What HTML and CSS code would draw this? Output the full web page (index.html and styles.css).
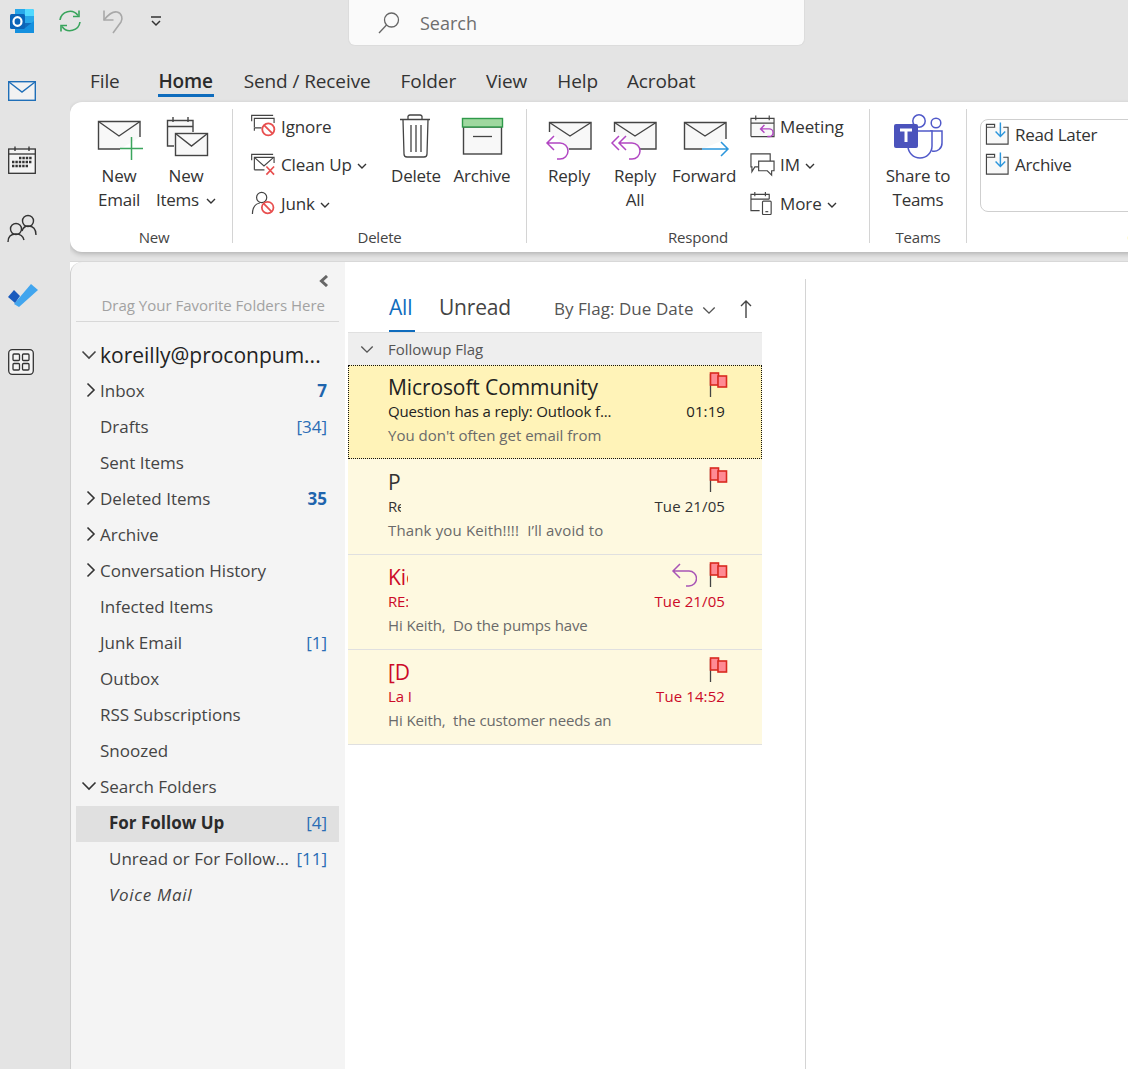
FILE: index.html
```html
<!DOCTYPE html>
<html lang="en">
<head>
<meta charset="utf-8">
<title>Outlook</title>
<link rel="stylesheet" href="styles.css">
</head>
<body>
<svg class="defs" width="0" height="0" aria-hidden="true">
  <defs>
    <symbol id="flag" viewBox="0 0 20 26">
      <path d="M1.500 2V25" fill="none" stroke="#444" stroke-width="1.300"/>
      <rect x="1.500" y="1" width="8" height="12" fill="#ff8a94" stroke="#d92a20" stroke-width="1.600"/>
      <rect x="9" y="4" width="8.500" height="11" fill="#ff8a94" stroke="#d92a20" stroke-width="1.600"/>
    </symbol>
    <symbol id="chev-down" viewBox="0 0 16 10">
      <path d="M1.500 1.500 8 8l6.500-6.500" fill="none" stroke="currentColor" stroke-width="1.600"/>
    </symbol>
    <symbol id="chev-right" viewBox="0 0 10 16">
      <path d="M1.500 1.500 8 8l-6.500 6.500" fill="none" stroke="currentColor" stroke-width="1.600"/>
    </symbol>
    <symbol id="tiny-down" viewBox="0 0 10 6">
      <path d="M1 1l4 4 4-4" fill="none" stroke="currentColor" stroke-width="1.400"/>
    </symbol>
  </defs>
</svg>
<div class="app">
  <header class="titlebar">
    <div class="qat">
      <svg class="logo" width="24" height="24" viewBox="0 0 24 24">
        <path d="M5 0h17a2 2 0 0 1 2 2v10H5z" fill="#28a8ea"/>
        <path d="M15 0h7a2 2 0 0 1 2 2v5h-9z" fill="#50d9ff"/>
        <path d="M5 7h10v7H5z" fill="#0a7ad1"/>
        <path d="M15 7h9v7h-9z" fill="#28a8ea"/>
        <path d="M5 14h19v8a2 2 0 0 1-2 2H5z" fill="#0f6cbd"/>
        <path d="M5 16l10 3 9-7v12H5z" fill="#1490df"/>
        <rect x="0" y="5" width="15" height="15" rx="1.500" fill="#0a64b8"/>
        <ellipse cx="7.500" cy="12.500" rx="4" ry="4.300" fill="none" stroke="#fff" stroke-width="2.200"/>
      </svg>
      <svg class="sync" width="24" height="24" viewBox="0 0 24 24" fill="none" stroke="#38a45c" stroke-width="1.600">
        <path d="M2 11A10 10 0 0 1 20 6.500"/><path d="M22 13A10 10 0 0 1 4 17.500"/>
        <path d="M21 1.500V7.500H15"/><path d="M3 22.500V16.500H9"/>
      </svg>
      <svg class="undo" width="24" height="26" viewBox="0 0 24 26" fill="none" stroke="#a8a8a8" stroke-width="1.600">
        <path d="M3 1.500V11H12.500"/><path d="M3 11C7 6 11 2 16 3c5 1 6 7 4 10l-8 11"/>
      </svg>
      <svg class="qat-more" width="10" height="11" viewBox="0 0 10 11" fill="none" stroke="#333" stroke-width="1.500">
        <path d="M0 1H10"/><path d="M1 5l4 4 4-4"/>
      </svg>
    </div>
    <div class="search">
      <svg width="22" height="22" viewBox="0 0 22 22" fill="none" stroke="#666" stroke-width="1.300">
        <circle cx="13.500" cy="8" r="7"/><path d="M8.500 13 1 21"/>
      </svg>
      <span>Search</span>
    </div>
  </header>
  <div class="workspace">
    <nav class="rail">
      <div class="rail-item">
        <svg width="28" height="20" viewBox="0 0 28 20"><rect x=".7" y=".7" width="26.600" height="18.600" fill="#f2f2f2" stroke="#1f6fb8" stroke-width="1.400"/><path d="M1 1l13 10L27 1" fill="none" stroke="#1f6fb8" stroke-width="1.400"/></svg>
      </div>
      <div class="rail-item">
        <svg width="28" height="28" viewBox="0 0 28 28"><rect x=".7" y="3" width="26.600" height="24.300" fill="#f4f4f4" stroke="#333" stroke-width="1.300"/><path d="M1 8H27" stroke="#333" stroke-width="1.300"/><path d="M7 .5V5M21 .5V5" stroke="#333" stroke-width="1.300"/><path d="M11 12H24M4 16H24M4 20H21" stroke="#333" stroke-width="2.400" stroke-dasharray="2.400 1"/></svg>
      </div>
      <div class="rail-item short rail-tight">
        <svg width="30" height="28" viewBox="0 0 30 28" fill="none" stroke="#333" stroke-width="1.400"><circle cx="9" cy="15" r="5.500"/><path d="M1 28c0-6 3-8 8-8s7 2 8 6"/><circle cx="21" cy="7" r="5.500"/><path d="M15 17c1-3 3-5 6-5 5 0 8 3 8 9"/></svg>
      </div>
      <div class="rail-item short rail-tight">
        <svg width="31" height="24" viewBox="0 0 31 24"><path d="M7 21 24 1l7 6-19 17z" fill="#41a5ee"/><path d="M7 7l6 6-5 7-7-6z" fill="#185abd"/></svg>
      </div>
      <div class="rail-item short">
        <svg width="26" height="26" viewBox="0 0 26 26" fill="#f4f4f4" stroke="#333" stroke-width="1.300"><rect x=".7" y=".7" width="24.600" height="24.600" rx="3.500"/><rect x="5" y="5" width="6.500" height="6.500" rx="1"/><rect x="14.500" y="5" width="6.500" height="6.500" rx="1"/><rect x="5" y="14.500" width="6.500" height="6.500" rx="1"/><rect x="14.500" y="14.500" width="6.500" height="6.500" rx="1"/></svg>
      </div>
    </nav>
    <div class="main">
      <div class="tabs">
        <span class="tab tab-file">File</span>
        <span class="tab tab-active">Home</span>
        <span class="tab">Send / Receive</span>
        <span class="tab">Folder</span>
        <span class="tab">View</span>
        <span class="tab tab-help">Help</span>
        <span class="tab">Acrobat</span>
      </div>
      <section class="ribbon">
        <div class="group group-new">
          <div class="group-body">
            <div class="big-btn big-first">
              <svg class="big-icon" viewBox="0 0 52 53" fill="none">
                <path d="M27 39H5.500V11.500H47V27" fill="#f8f8f8" stroke="#444" stroke-width="1.400"/>
                <path d="M5.500 11.500 26 26 47 11.500" stroke="#444" stroke-width="1.400"/>
                <path d="M38.500 27V50M27 38.500H50" stroke="#3ba55d" stroke-width="1.500"/>
              </svg>
              <span>New<br>Email</span>
            </div>
            <div class="big-btn">
              <svg class="big-icon" viewBox="0 0 52 53" fill="none" stroke="#444" stroke-width="1.400">
                <path d="M14 36H7.500V10.500H33V22" fill="#f8f8f8"/>
                <path d="M7.500 16.500H33M13 7V12M28 7V12"/>
                <rect x="15.500" y="23.500" width="32" height="22" fill="#f8f8f8"/>
                <path d="M15.500 23.500 31.500 36 47.500 23.500"/>
              </svg>
              <span>New<br>Items <svg class="caret caret-wide" width="10" height="6"><use href="#tiny-down"/></svg></span>
            </div>
          </div>
          <div class="group-label group-label-new">New</div>
        </div>
        <div class="group group-delete">
          <div class="group-body">
            <div class="small-col">
              <div class="small-btn">
                <svg class="small-icon" viewBox="0 0 26 24" fill="none">
                  <path d="M.7 7V1H23M3.500 13V4H24V9M3.500 17V14H11" stroke="#444" stroke-width="1.200"/>
                  <circle cx="18" cy="15.500" r="6.300" fill="#fff" stroke="#e84f4f" stroke-width="1.900"/><path d="M13.500 11l9 9" stroke="#e84f4f" stroke-width="1.900"/>
                </svg>
                <span>Ignore</span>
              </div>
              <div class="small-btn">
                <svg class="small-icon" viewBox="0 0 26 24" fill="none">
                  <path d="M.7 7V1H23M3.500 17V4H24V10M3.500 17H14" stroke="#444" stroke-width="1.200"/>
                  <path d="M3.500 4l10 9 10-9" stroke="#444" stroke-width="1.200"/>
                  <path d="M16 13.500l8 8.500M24 13.500 16 22" stroke="#e84f4f" stroke-width="1.700"/>
                </svg>
                <span>Clean Up <svg class="caret" width="10" height="6"><use href="#tiny-down"/></svg></span>
              </div>
              <div class="small-btn">
                <svg class="small-icon" viewBox="0 0 26 26" fill="none">
                  <circle cx="11" cy="7" r="5.500" stroke="#444" stroke-width="1.300"/>
                  <path d="M1 25c0-7 3-11 8-12" stroke="#444" stroke-width="1.300"/>
                  <circle cx="17.500" cy="18" r="6.300" fill="#fff" stroke="#e84f4f" stroke-width="1.900"/><path d="M13 13.500l9 9" stroke="#e84f4f" stroke-width="1.900"/>
                </svg>
                <span>Junk <svg class="caret" width="10" height="6"><use href="#tiny-down"/></svg></span>
              </div>
            </div>
            <div class="big-btn">
              <svg class="big-icon" viewBox="0 0 52 53" fill="none" stroke="#444" stroke-width="1.300">
                <path d="M10 9.500H40M18 9V7.500a2 2 0 0 1 2-2.500h10a2 2 0 0 1 2 2.500V9"/>
                <path d="M13 10 14 44a3 3 0 0 0 3 3H34a3 3 0 0 0 3-3L38 10"/>
                <path d="M21 15V42M26 15V42M31 15V42"/>
              </svg>
              <span>Delete</span>
            </div>
            <div class="big-btn">
              <svg class="big-icon" viewBox="0 0 52 53" fill="none">
                <rect x="7.500" y="17" width="38" height="27" fill="#f8f8f8" stroke="#444" stroke-width="1.400"/>
                <rect x="6.500" y="8.500" width="40" height="8.500" fill="#9fd89f" stroke="#2f9a4a" stroke-width="1.400"/>
                <path d="M17 26.500H36" stroke="#444" stroke-width="1.300"/>
              </svg>
              <span>Archive</span>
            </div>
          </div>
          <div class="group-label">Delete</div>
        </div>
        <div class="group group-respond">
          <div class="group-body">
            <div class="big-btn">
              <svg class="big-icon" viewBox="0 0 52 53" fill="none">
                <path d="M6.500 22V12.500H48V39H26" fill="#f8f8f8" stroke="#444" stroke-width="1.400"/>
                <path d="M6.500 12.500 27 26 48 12.500" stroke="#444" stroke-width="1.400"/>
                <path d="M11 26 4 33l7 7M4 33H17a8 8 0 0 1 0 16h-3" stroke="#b146c2" stroke-width="1.500"/>
              </svg>
              <span>Reply</span>
            </div>
            <div class="big-btn">
              <svg class="big-icon" viewBox="0 0 52 53" fill="none">
                <path d="M5.500 22V12.500H47V39H31" fill="#f8f8f8" stroke="#444" stroke-width="1.400"/>
                <path d="M5.500 12.500 26 26 47 12.500" stroke="#444" stroke-width="1.400"/>
                <path d="M10 26 3 33l7 7M17 26l-7 7 7 7M10 33H23a8 8 0 0 1 0 16h-3" stroke="#b146c2" stroke-width="1.500"/>
              </svg>
              <span>Reply<br>All</span>
            </div>
            <div class="big-btn big-wide">
              <svg class="big-icon" viewBox="0 0 52 53" fill="none">
                <path d="M24 39H6.500V12.500H48V29" fill="#f8f8f8" stroke="#444" stroke-width="1.400"/>
                <path d="M6.500 12.500 27 26 48 12.500" stroke="#444" stroke-width="1.400"/>
                <path d="M24 39H50M43 32l7 7-7 7" stroke="#2b96dc" stroke-width="1.500"/>
              </svg>
              <span>Forward</span>
            </div>
            <div class="small-col small-col-respond">
              <div class="small-btn">
                <svg class="small-icon" viewBox="0 0 26 24" fill="none">
                  <path d="M1 23V4H25V23H1M1 9H25M6 1V6M20 1V6" stroke="#444" stroke-width="1.200" fill="#f8f8f8"/>
                  <path d="M15 11l-4 4 4 4M11 15H20a3.500 3.500 0 0 1 0 8h-2" stroke="#b146c2" stroke-width="1.500"/>
                </svg>
                <span>Meeting</span>
              </div>
              <div class="small-btn">
                <svg class="small-icon" viewBox="0 0 26 24" fill="none" stroke="#444" stroke-width="1.200">
                  <path d="M9 14H5L2 19V14H1V.5H21V8"/>
                  <path d="M9 8H25V18H22.500V22.500L18 18H9Z" fill="#fff"/>
                </svg>
                <span>IM <svg class="caret" width="10" height="6"><use href="#tiny-down"/></svg></span>
              </div>
              <div class="small-btn">
                <svg class="small-icon" viewBox="0 0 26 24" fill="none" stroke="#444" stroke-width="1.200">
                  <path d="M10 20H1V3H20V8M1 8H20M5 .5V5M16 .5V5"/>
                  <rect x="13" y="10" width="9" height="14" rx="1" fill="#fff"/><path d="M16 21h3"/>
                </svg>
                <span>More <svg class="caret" width="10" height="6"><use href="#tiny-down"/></svg></span>
              </div>
            </div>
          </div>
          <div class="group-label">Respond</div>
        </div>
        <div class="group group-teams">
          <div class="group-body">
            <div class="big-btn big-teams">
              <svg class="big-icon" viewBox="0 0 52 53" fill="none" stroke="#5059c9" stroke-width="1.500">
                <circle cx="44" cy="13" r="4.800"/>
                <circle cx="27" cy="11" r="6.200"/>
                <path d="M38 21H50V33A8 8 0 0 1 40 41"/>
                <path d="M16 21H40V36A12 12 0 0 1 16 36Z" fill="#fff"/>
                <rect x="2" y="14" width="24" height="24" rx="2" fill="#4b53bc" stroke="none"/>
                <path d="M8 20H20M14 20V32" stroke="#fff" stroke-width="3"/>
              </svg>
              <span>Share to<br>Teams</span>
            </div>
          </div>
          <div class="group-label">Teams</div>
        </div>
        <div class="group group-quick">
          <div class="group-body">
            <div class="quick-box">
              <div class="quick-row">
                <svg class="small-icon" viewBox="0 0 26 24" fill="none">
                  <path d="M1.500 5H10V2H1.500V22.500H24V5H19" stroke="#444" stroke-width="1.200" fill="#f8f8f8"/>
                  <path d="M16 0V14M11 9.500l5 5 5-5" stroke="#2b96dc" stroke-width="1.500"/>
                </svg>
                <span>Read Later</span>
              </div>
              <div class="quick-row">
                <svg class="small-icon" viewBox="0 0 26 24" fill="none">
                  <path d="M1.500 5H10V2H1.500V22.500H24V5H19" stroke="#444" stroke-width="1.200" fill="#f8f8f8"/>
                  <path d="M16 0V14M11 9.500l5 5 5-5" stroke="#2b96dc" stroke-width="1.500"/>
                </svg>
                <span>Archive</span>
              </div>
            </div>
          </div>
          <div class="group-label">Quick Steps</div>
        </div>
      </section>
      <div class="panes">
        <aside class="folders">
          <div class="fav">
            <svg class="collapse" width="10" height="12" viewBox="0 0 10 12"><path d="M8 1 2.500 6 8 11" fill="none" stroke="#666" stroke-width="3"/></svg>
            <div class="fav-hint">Drag Your Favorite Folders Here</div>
          </div>
          <div class="account"><svg class="acc-chev" width="16" height="10"><use href="#chev-down"/></svg><span class="account-name">koreilly@proconpum...</span></div>
          <ul class="tree">
            <li class="row"><svg class="row-chev" width="10" height="16"><use href="#chev-right"/></svg><span class="name">Inbox</span><b class="count-bold">7</b></li>
            <li class="row"><span class="name">Drafts</span><span class="count">[34]</span></li>
            <li class="row"><span class="name">Sent Items</span></li>
            <li class="row"><svg class="row-chev" width="10" height="16"><use href="#chev-right"/></svg><span class="name">Deleted Items</span><b class="count-bold">35</b></li>
            <li class="row"><svg class="row-chev" width="10" height="16"><use href="#chev-right"/></svg><span class="name">Archive</span></li>
            <li class="row"><svg class="row-chev" width="10" height="16"><use href="#chev-right"/></svg><span class="name">Conversation History</span></li>
            <li class="row"><span class="name">Infected Items</span></li>
            <li class="row"><span class="name">Junk Email</span><span class="count">[1]</span></li>
            <li class="row"><span class="name">Outbox</span></li>
            <li class="row"><span class="name">RSS Subscriptions</span></li>
            <li class="row"><span class="name">Snoozed</span></li>
            <li class="row"><svg class="row-chev-down" width="16" height="10"><use href="#chev-down"/></svg><span class="name">Search Folders</span></li>
            <li class="row row-sub row-selected"><span class="name">For Follow Up</span><span class="count">[4]</span></li>
            <li class="row row-sub"><span class="name">Unread or For Follow...</span><span class="count">[11]</span></li>
            <li class="row row-sub"><span class="name name-italic">Voice Mail</span></li>
          </ul>
        </aside>
        <div class="reading">
          <section class="list">
            <div class="list-tabs">
              <span class="list-tab list-tab-active">All</span>
              <span class="list-tab">Unread</span>
              <span class="sort">By Flag: Due Date <svg class="sort-chev" width="14" height="9"><use href="#chev-down"/></svg></span>
              <svg class="sort-arrow" width="12" height="18" viewBox="0 0 12 18" fill="none" stroke="#444" stroke-width="1.400"><path d="M6 1V18M1 6l5-5 5 5"/></svg>
            </div>
            <div class="group-head"><svg width="14" height="9"><use href="#chev-down"/></svg><span>Followup Flag</span></div>
            <article class="mail mail-selected">
              <div class="mail-top"><span class="sender">Microsoft Community</span><svg class="flag" width="20" height="26"><use href="#flag"/></svg></div>
              <div class="mail-mid"><span class="subject">Question has a reply: Outlook f...</span><span class="time">01:19</span></div>
              <div class="preview">You don't often get email from</div>
            </article>
            <article class="mail">
              <div class="mail-top"><span class="sender clip-a">P</span><svg class="flag" width="20" height="26"><use href="#flag"/></svg></div>
              <div class="mail-mid"><span class="subject clip-a">Re</span><span class="time">Tue 21/05</span></div>
              <div class="preview preview-wide">Thank you Keith!!!!&nbsp; I’ll avoid to</div>
            </article>
            <article class="mail mail-red">
              <div class="mail-top"><span class="sender clip-b">Kie</span><svg class="reply-mark" width="26" height="24" viewBox="0 0 26 24" fill="none" stroke="#a855b5" stroke-width="1.500"><path d="M9 1 2 8l7 7M2 8H18a7.500 7.500 0 0 1 0 15h-3"/></svg><svg class="flag" width="20" height="26"><use href="#flag"/></svg></div>
              <div class="mail-mid"><span class="subject clip-b">RE:</span><span class="time">Tue 21/05</span></div>
              <div class="preview preview-tight">Hi Keith,&nbsp; Do the pumps have</div>
            </article>
            <article class="mail mail-red">
              <div class="mail-top"><span class="sender clip-c">[D</span><svg class="flag" width="20" height="26"><use href="#flag"/></svg></div>
              <div class="mail-mid"><span class="subject clip-c">La I</span><span class="time">Tue 14:52</span></div>
              <div class="preview preview-tight">Hi Keith,&nbsp; the customer needs an</div>
            </article>
          </section>
        </div>
      </div>
    </div>
  </div>
</div>
</body>
</html>
```

FILE: styles.css
```css
* { box-sizing: border-box; }
html, body { margin: 0; padding: 0; height: 100%; overflow: hidden; }
body { background: #e4e4e4; font-family: "Open Sans", "Noto Sans", "Liberation Sans", sans-serif; color: #333; }
.defs { position: absolute; }
svg { display: block; flex: none; }
.app { width: 1128px; height: 1069px; display: flex; flex-direction: column; overflow: hidden; }

.titlebar { height: 46px; display: flex; flex: none; }
.qat { display: flex; align-items: flex-start; width: 348px; padding: 9px 0 0 10px; }
.logo { margin-right: 24px; }
.sync { margin-right: 19px; }
.undo { margin-right: 26px; }
.qat-more { margin-top: 7px; }
.search { width: 457px; height: 46px; background: #fafafa; border: 1px solid #dcdcdc; border-top: 0; border-radius: 0 0 7px 7px; display: flex; align-items: center; padding-left: 29px; gap: 20px; color: #6e6e6e; font-size: 18px; }

.workspace { flex: 1; display: flex; min-height: 0; }
.rail { width: 70px; flex: none; padding: 10px 0 0 8px; }
.rail-item { height: 69px; display: flex; align-items: center; }
.rail-item.short { height: 67px; }
.rail-tight svg { margin-left: -1px; }

.main { flex: 1; min-width: 0; display: flex; flex-direction: column; overflow: hidden; }
.tabs { height: 56px; flex: none; display: flex; gap: 30px; padding: 20px 0 0 20px; font-size: 19px; color: #333; letter-spacing: -0.1px; }
.tab { height: 30px; line-height: 30px; }
.tab-file { margin-right: 8px; }
.tab-active { font-weight: 600; color: #2b2b2b; border-bottom: 3px solid #0f6cbd; height: 31px; min-width: 56px; text-align: center; }
.tab-help { margin-right: -1px; }

.ribbon { height: 150px; flex: none; width: 1400px; background: #fff; border-radius: 12px 0 0 12px; box-shadow: 0 2px 5px rgba(0,0,0,.22); display: flex; align-items: flex-start; padding-top: 7px; }
.group { height: 134px; display: flex; flex-direction: column; border-right: 1px solid #d4d4d4; padding-top: 1px; flex: none; }
.group-body { flex: 1; display: flex; min-height: 0; }
.group-label { height: 12px; line-height: 12px; text-align: center; font-size: 15px; color: #444; letter-spacing: -0.2px; }
.group-label-new { padding-left: 6px; }
.group-new { width: 163px; }
.group-new .group-body { padding-left: 15px; }
.group-delete { width: 294px; }
.group-delete .group-body { padding-left: 18px; }
.group-respond { width: 343px; }
.group-respond .group-body { padding-left: 9px; }
.group-teams { width: 97px; }
.group-quick { width: 400px; border-right: 0; }
.group-quick .group-body { padding-left: 13px; }

.big-btn { width: 66px; display: flex; flex-direction: column; align-items: center; font-size: 17px; line-height: 23.500px; color: #333; text-align: center; white-space: nowrap; letter-spacing: -0.25px; }
.big-first { width: 68px; }
.big-wide { width: 72px; }
.big-teams { width: 97px; }
.big-icon { width: 52px; height: 53px; margin-bottom: 1px; }
.caret { display: inline-block; vertical-align: 2px; margin-left: 1px; color: #333; }
.caret-wide { margin-left: 3px; }

.small-col { width: 132px; display: flex; flex-direction: column; margin-top: -3px; }
.small-col-respond { margin-left: 10px; width: 110px; }
.small-btn { height: 38.500px; display: flex; align-items: center; gap: 5px; font-size: 17px; color: #333; letter-spacing: -0.1px; white-space: nowrap; }
.small-icon { width: 25px; height: 24px; }

.quick-box { width: 380px; height: 93px; margin-top: 9px; border: 1px solid #cfcfcf; border-radius: 8px; padding: 0 0 0 4px; }
.quick-row { height: 30px; display: flex; align-items: center; gap: 5px; font-size: 17px; letter-spacing: -0.3px; white-space: nowrap; position: relative; top: -1px; }

.panes { flex: 1; display: flex; min-height: 0; margin-top: 10px; background: #fff; box-shadow: 0 -1px 0 #d8d8d8; }
.folders { width: 275px; flex: none; background: #f4f4f4; border-left: 1px solid #cfcfcf; border-radius: 12px 0 0 0; padding: 0 6px 0 5px; }
.fav { height: 60px; border-bottom: 1px solid #d8d8d8; display: flex; flex-direction: column; align-items: flex-end; padding: 13px 14px 0 0; }
.collapse { margin-right: -4px; }
.fav-hint { font-size: 15px; line-height: 20px; margin-top: 8px; color: #a2a2a2; white-space: nowrap; }
.account { height: 36px; margin-top: 15px; display: flex; align-items: center; padding-left: 5px; color: #222; }
.acc-chev { color: #444; margin-right: 3px; }
.account-name { font-size: 21px; white-space: nowrap; }
.tree { list-style: none; margin: 1px 0 0; padding: 0; }
.row { height: 36px; display: flex; align-items: center; padding: 0 12px 4px 24px; font-size: 17px; color: #444; }
.row-chev { color: #333; margin-left: -14px; margin-right: 4px; }
.row-chev-down { color: #333; margin-left: -19px; margin-right: 3px; }
.name { flex: 1; white-space: nowrap; }
.name-italic { font-style: italic; letter-spacing: 0.7px; }
.count { color: #2a6db5; }
.count-bold { color: #1f65ad; font-weight: 700; }
.row-sub { padding-left: 33px; }
.row-selected { background: #e0e0e0; }
.row-selected .name { font-weight: 700; color: #2b2b2b; }

.reading { flex: 1; min-width: 0; }
.list { width: 461px; height: 100%; margin-top: 17px; border-right: 1px solid #d4d4d4; padding: 0 43px 0 3px; }
.list-tabs { height: 53px; display: flex; align-items: flex-start; padding-left: 41px; }
.list-tab { font-size: 21px; line-height: 56px; margin-right: 24px; color: #444; letter-spacing: -0.2px; }
.list-tab-active { color: #0f6cbd; height: 53px; min-width: 26px; border-bottom: 2px solid #0f6cbd; }
.sort { font-size: 17px; line-height: 60px; color: #555; margin-left: 19px; display: flex; align-items: center; gap: 8px; letter-spacing: 0.06px; }
.sort-chev { color: #555; margin-top: 3px; }
.sort-arrow { margin: 21px 0 0 24px; }
.group-head { height: 33px; background: #eee; border-top: 1px solid #e0e0e0; display: flex; align-items: center; gap: 14px; padding-left: 12px; font-size: 15px; color: #555; }
.mail { height: 95px; background: #fef9e0; border-bottom: 1px solid #e0e0e0; padding: 8px 37px 0 40px; color: #333; }
.mail-selected + .mail { height: 96px; padding-top: 9px; }
.mail-selected { background: #fff3b8; border: 1px dotted #111; height: 94px; padding: 7px 36px 0 39px; color: #222; }
.mail-top { height: 25px; display: flex; align-items: flex-start; }
.sender { flex: 1; font-size: 21px; line-height: 29px; white-space: nowrap; overflow: hidden; letter-spacing: -0.1px; height: 29px; }
.flag { margin-right: -4px; margin-top: -1px; }
.reply-mark { margin: 0 12px 0 0; }
.mail-mid { height: 25px; display: flex; align-items: center; font-size: 15px; }
.subject { flex: 1; white-space: nowrap; overflow: hidden; letter-spacing: -0.14px; }
.time { letter-spacing: 0.1px; }
.preview { height: 24px; line-height: 24px; font-size: 15px; color: #6a6a6a; white-space: nowrap; }
.preview-wide { letter-spacing: 0.15px; }
.preview-tight { letter-spacing: -0.12px; }
.sender.clip-a, .subject.clip-a { flex: 0 0 13px; margin-right: auto; }
.sender.clip-b, .subject.clip-b { flex: 0 0 20px; margin-right: auto; }
.sender.clip-c, .subject.clip-c { flex: 0 0 23px; margin-right: auto; }
.mail-red .sender, .mail-red .subject, .mail-red .time { color: #cc0a28; }
```
